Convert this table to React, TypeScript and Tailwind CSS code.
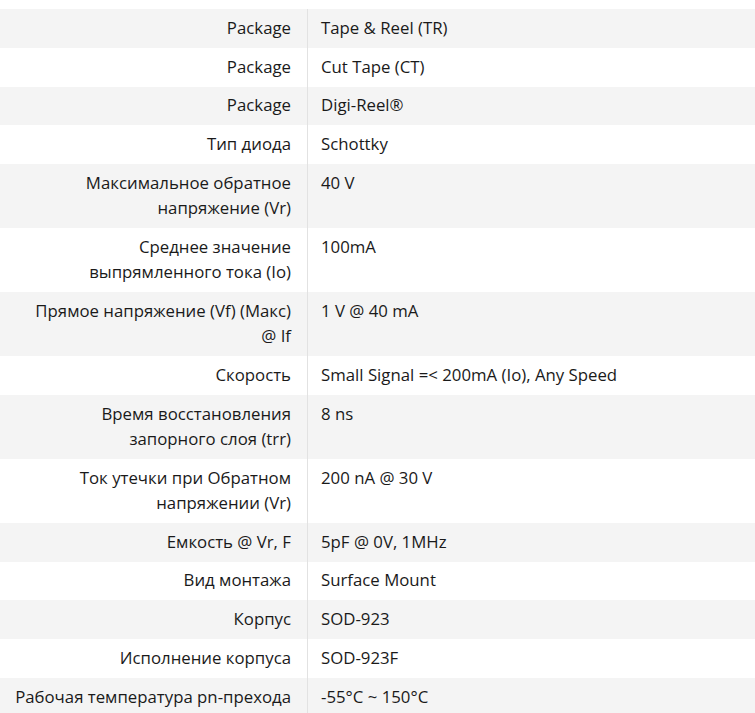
const rows: [string, string][] = [
  ["Package", "Tape & Reel (TR)"],
  ["Package", "Cut Tape (CT)"],
  ["Package", "Digi-Reel®"],
  ["Тип диода", "Schottky"],
  ["Максимальное обратное напряжение (Vr)", "40 V"],
  ["Среднее значение выпрямленного тока (Io)", "100mA"],
  ["Прямое напряжение (Vf) (Макс) @\u00a0If", "1 V @ 40 mA"],
  ["Скорость", "Small Signal =< 200mA (Io), Any Speed"],
  ["Время восстановления запорного слоя (trr)", "8 ns"],
  ["Ток утечки при Обратном напряжении (Vr)", "200 nA @ 30 V"],
  ["Емкость @ Vr, F", "5pF @ 0V, 1MHz"],
  ["Вид монтажа", "Surface Mount"],
  ["Корпус", "SOD-923"],
  ["Исполнение корпуса", "SOD-923F"],
  ["Рабочая температура pn-прехода", "-55°C ~ 150°C"],
];

export default function App() {
  return (
    <div className="w-[755px] h-[713px] overflow-hidden bg-white pt-[9px] text-[16.8px] text-[#1a1a1a] font-['Open_Sans',sans-serif]">
      {rows.map(([k, v], i) => (
        <div key={i} className={`flex ${i % 2 === 0 ? "bg-[#f4f4f4]" : "bg-white"}`}>
          <div className="w-[308px] shrink-0 border-r border-[#e2e2e2] pr-[16px] pl-[12px] pt-[5.75px] pb-[7.75px] leading-[25.25px] text-right">
            {k}
          </div>
          <div className="flex-1 pl-[13px] pr-[10px] pt-[5.75px] pb-[7.75px] leading-[25.25px]">{v}</div>
        </div>
      ))}
    </div>
  );
}
